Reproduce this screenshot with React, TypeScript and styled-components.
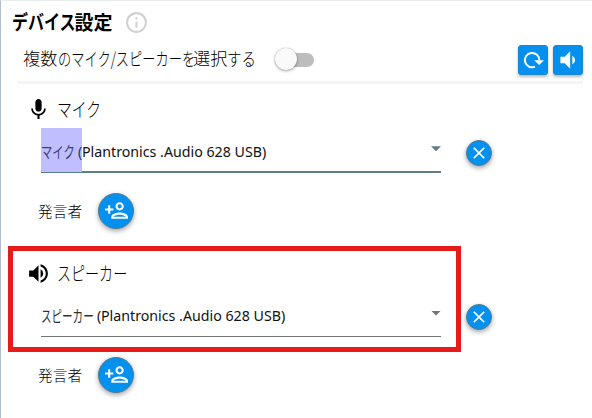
import React from "react";
import styled, { createGlobalStyle } from "styled-components";
import { MdClose, MdInfoOutline, MdMic, MdOutlinePersonAdd, MdVolumeDown, MdVolumeUp } from "react-icons/md";

const Global = createGlobalStyle`
  * { box-sizing: border-box; }
  body { margin: 0; background: #fff; }
  button { padding: 0; margin: 0; font: inherit; }
  svg { display: block; flex: none; }
`;

const Panel = styled.main`
  position: relative;
  width: 592px;
  height: 418px;
  overflow: hidden;
  background: #fff;
  border-top: 1px solid #e9edee;
  border-left: 1px solid #b0bdca;
  color: #000;
  font-family: "Noto Sans", "Noto Sans CJK JP", sans-serif;
`;

const Run = styled.span<{ $w: number; $s?: number; $size?: number }>`
  display: inline-block;
  flex: none;
  width: ${(p) => p.$w}px;
  ${(p) => (p.$size ? `font-size: ${p.$size}px;` : "")}
  white-space: pre;
  transform: scaleX(${(p) => p.$s ?? 1});
  transform-origin: 0 50%;
`;

const Header = styled.header`
  display: flex;
  align-items: center;
  height: 42px;
  padding-left: 11px;
`;

const Title = styled.h1`
  display: flex;
  width: 112px;
  margin: 0;
  font: 600 19px/28px "Noto Sans CJK JP", sans-serif;
`;

const Toolbar = styled.div`
  display: flex;
  align-items: center;
  height: 37px;
  padding-left: 22px;
  width: 582px;
`;

const ToolbarLabel = styled.span`
  display: flex;
  width: 251px;
  font: 300 17.2px/26px "Noto Sans CJK JP", sans-serif;
  margin-top: -8px;
`;

const Switch = styled.button`
  display: flex;
  align-items: center;
  width: 40px;
  height: 14px;
  margin-top: -4px;
  margin-right: auto;
  border: 0;
  border-radius: 7px;
  background: linear-gradient(90deg, transparent 8px, #bdbdbd 8px);
`;

const Knob = styled.span`
  flex: none;
  width: 22px;
  height: 22px;
  margin-left: 1px;
  margin-top: -1px;
  border-radius: 50%;
  background: #fafafa;
  box-shadow: 0 1px 3px rgba(0, 0, 0, 0.35), 0 0 1px rgba(0, 0, 0, 0.3);
`;

const ToolButton = styled.button`
  display: flex;
  align-items: center;
  justify-content: center;
  width: 30px;
  height: 30px;
  margin-left: 5px;
  margin-top: -3px;
  border: 1px solid #1b87cd;
  border-radius: 3px;
  background: #0390ee;
  color: #fff;
  box-shadow: 0 2px 3px rgba(0, 0, 0, 0.28);
`;

const Divider = styled.hr`
  width: 566px;
  height: 3px;
  margin: 0.5px 0 0 16px;
  border: 0;
  background: #f4f4f4;
`;

const Device = styled.section`
  height: 164px;
  padding-top: 12.5px;
`;

const DeviceTitle = styled.h2`
  display: flex;
  align-items: center;
  gap: 6px;
  height: 26px;
  margin: 0;
  padding-left: 25px;
  font: 300 19.5px/26px "Noto Sans CJK JP", sans-serif;
`;

const IconBox = styled.span`
  display: flex;
  justify-content: center;
  width: 25px;
`;

const SelectRow = styled.div`
  display: flex;
  align-items: center;
  height: 51px;
  padding-left: 40px;
`;

const Select = styled.div<{ $active?: boolean }>`
  display: flex;
  align-items: center;
  width: 400px;
  height: 45px;
  margin-top: ${(p) => (p.$active ? 6.5 : 6)}px;
  border-bottom: ${(p) => (p.$active ? "2px solid #607d8b" : "1px solid #757575")};
  color: ${(p) => (p.$active ? "#607d8b" : "#757575")};
`;

const Value = styled.span`
  display: flex;
  flex: 1;
  height: 44px;
  font-size: 15px;
  line-height: 47px;
  color: #111;
`;

const Marked = styled.span<{ $on?: boolean }>`
  display: flex;
  height: 44px;
  background: ${(p) => (p.$on ? "#bfbfff" : "transparent")};
  color: ${(p) => (p.$on ? "#302f62" : "#111")};
`;

const Kana = styled.span`
  height: 44px;
  font-family: "Noto Sans CJK JP", sans-serif;
  font-size: 15.5px;
  line-height: 46px;
  opacity: 0.88;
`;

const Caret = styled.span`
  width: 10px;
  height: 5px;
  margin-top: -2px;
  background: currentColor;
  clip-path: polygon(0 0, 100% 0, 50% 100%);
`;

const RoundButton = styled.button<{ $d: number }>`
  display: flex;
  flex: none;
  align-items: center;
  justify-content: center;
  width: ${(p) => p.$d}px;
  height: ${(p) => p.$d}px;
  border: 1px solid #557b91;
  border-radius: 50%;
  background: #0390ee;
  color: #fff;
  box-shadow: 0 2px 5px rgba(0, 0, 0, 0.36);
`;

const RemoveSlot = styled.div`
  padding: 10px 0 0 25px;
`;

const SpeakerRow = styled.div`
  display: flex;
  align-items: center;
  height: 36px;
  margin-top: 19.5px;
  padding-left: 37px;
`;

const SpeakerLabel = styled.span`
  width: 60px;
  font: 300 14.7px/22px "Noto Sans CJK JP", sans-serif;
`;

const Highlight = styled.div`
  position: absolute;
  left: 7px;
  top: 245px;
  width: 453px;
  height: 106px;
  border: 5px solid #e81b1b;
`;

function Reload() {
  return (
    <svg width="22" height="20" viewBox="0 0 22 20" fill="none">
      <path d="M13 16.7A7.2 7.2 0 1 1 17.3 10.4" stroke="#fff" strokeWidth="2" />
      <path d="M12.2 10.2H22L17.1 15Z" fill="#fff" />
    </svg>
  );
}

interface DeviceProps {
  icon: React.ReactNode;
  name: string;
  nameWidth: number;
  nameScale: number;
  valueScale: number;
  active?: boolean;
}

function DevicePicker({ icon, name, nameWidth, nameScale, valueScale, active }: DeviceProps) {
  return (
    <Device>
      <DeviceTitle>
        <IconBox>{icon}</IconBox>
        <Run $w={80} $s={nameScale}>{name}</Run>
      </DeviceTitle>
      <SelectRow>
        <Select $active={active}>
          <Value>
            <Marked $on={active}>
              <Kana><Run $w={nameWidth} $s={valueScale}>{name}</Run></Kana>
              <Run $w={4} $s={0.93}>(</Run>
            </Marked>
            <Run $w={190} $s={0.947}>Plantronics .Audio 628 USB)</Run>
          </Value>
          <Caret />
        </Select>
        <RemoveSlot>
          <RoundButton $d={26} aria-label="削除"><MdClose size={20} /></RoundButton>
        </RemoveSlot>
      </SelectRow>
      <SpeakerRow>
        <SpeakerLabel>発言者</SpeakerLabel>
        <RoundButton $d={36} aria-label="発言者を追加"><MdOutlinePersonAdd size={25} /></RoundButton>
      </SpeakerRow>
    </Device>
  );
}

export default function App() {
  return (
    <>
      <Global />
      <Panel>
        <Header>
          <Title>
            <Run $w={62.5} $s={0.8} $size={20}>デバイス</Run>
            <Run $w={40}>設定</Run>
          </Title>
          <MdInfoOutline size={25} color="#d0d0d0" />
        </Header>
        <Toolbar>
          <ToolbarLabel>
            <Run $w={34.5}>複数</Run>
            <Run $w={135.5} $s={0.715} $size={18.5}>のマイク/スピーカーを</Run>
            <Run $w={34}>選択</Run>
            <Run $w={30} $s={0.8} $size={18}>する</Run>
          </ToolbarLabel>
          <Switch aria-label="複数選択"><Knob /></Switch>
          <ToolButton aria-label="更新"><Reload /></ToolButton>
          <ToolButton aria-label="音量"><MdVolumeDown size={26} /></ToolButton>
        </Toolbar>
        <Divider />
        <DevicePicker icon={<MdMic size={25} />} name="マイク" nameWidth={37} nameScale={0.76} valueScale={0.73} active />
        <DevicePicker icon={<MdVolumeUp size={25} />} name="スピーカー" nameWidth={56} nameScale={0.72} valueScale={0.68} />
        <Highlight />
      </Panel>
    </>
  );
}
